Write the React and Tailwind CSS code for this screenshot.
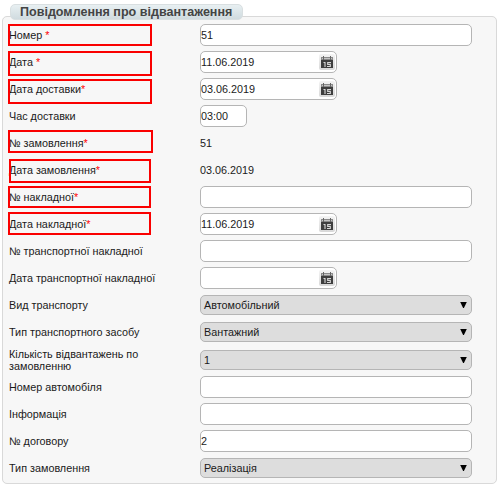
const rows = [
  { label: 'Номер ', required: true, kind: 'text', value: '51', mark: 'left-[5px] top-[2px] w-[144px] h-[22px]' },
  { label: 'Дата ', required: true, kind: 'date', value: '11.06.2019', mark: 'left-[5px] top-[2px] w-[144px] h-[25px]' },
  { label: 'Дата доставки', required: true, kind: 'date', value: '03.06.2019', mark: 'left-[5px] top-[3px] w-[144px] h-[25px]' },
  { label: 'Час доставки', kind: 'time', value: '03:00' },
  { label: '№ замовлення', required: true, kind: 'plain', value: '51', mark: 'left-[5px] top-0 w-[145px] h-[23px]' },
  { label: 'Дата замовлення', required: true, kind: 'plain', value: '03.06.2019', mark: 'left-[6px] top-[2px] w-[142px] h-[24px]' },
  { label: '№ накладної', required: true, kind: 'text', value: '', mark: 'left-[5px] top-[2px] w-[143px] h-[22px]' },
  { label: 'Дата накладної', required: true, kind: 'date', value: '11.06.2019', mark: 'left-[5px] top-px w-[143px] h-[23px]' },
  { label: '№ транспортної накладної', kind: 'text', value: '' },
  { label: 'Дата транспортної накладної', kind: 'date', value: '' },
  { label: 'Вид транспорту', kind: 'select', value: 'Автомобільний' },
  { label: 'Тип транспортного засобу', kind: 'select', value: 'Вантажний' },
  { label: 'Кількість відвантажень по замовленню', kind: 'select', value: '1', tall: true },
  { label: 'Номер автомобіля', kind: 'text', value: '' },
  { label: 'Інформація', kind: 'text', value: '' },
  { label: '№ договору', kind: 'text', value: '2' },
  { label: 'Тип замовлення', kind: 'select', value: 'Реалізація' },
];

function CalendarIcon() {
  return (
    <span className="mt-[2px] mr-px flex h-4 w-4 items-center justify-center rounded-[2px] bg-linear-to-b from-[#f4f4f4] to-[#d8d8d8]">
      <svg width="16" height="16" viewBox="0 0 16 16">
        <path d="M2 3h12v3H2z" fill="#8a8a8a" />
        <path d="M3 4h10v1H3z" fill="#c4c4c4" />
        <path d="M4 2h1v4H4zM11 2h1v4h-1z" fill="#666" />
        <path d="M2 6h12v8H2z" fill="#3e3e3e" />
        <path d="M4.5 8.5H6V13M12 8.5H8.7v1.9h2.6v2.1H8" fill="none" stroke="#d8d8d8" strokeWidth="1.1" />
      </svg>
    </span>
  );
}

const box = 'h-[22px] rounded-[5px] border border-[#b5b5b5] bg-white leading-[20px]';

function Control({ kind, value, tall }) {
  if (kind === 'plain') return <div className="mt-[2px] leading-[22px]">{value}</div>;
  if (kind === 'time') return <div className={`${box} mt-[2px] w-[47px]`}>{value}</div>;
  if (kind === 'date')
    return (
      <div className={`${box} mt-[2px] flex w-[137px] justify-between`}>
        <span>{value}</span>
        <CalendarIcon />
      </div>
    );
  if (kind === 'select')
    return (
      <div
        className={`${tall ? 'mt-[4px]' : 'mt-[3px]'} flex h-5 w-[272px] items-center justify-between rounded-[5px] border border-[#b5b5b5] bg-[#dddddd] pr-1 pl-[3px] leading-[18px]`}
      >
        <span>{value}</span>
        <svg width="7" height="8" viewBox="0 0 7 8">
          <path d="M0.2 1h6.6L3.9 7H3.1z" fill="#000" />
        </svg>
      </div>
    );
  return <div className={`${box} mt-[2px] w-[272px]`}>{value}</div>;
}

function Row({ label, required, mark, tall, kind, value }) {
  return (
    <div className={`relative flex items-start ${tall ? 'h-[28px]' : 'h-[27px]'}`}>
      <div className={`w-[191px] shrink-0 pr-[30px] ${tall ? 'pt-[2px] leading-[12px]' : 'pt-[2px] leading-[22px]'}`}>
        {label}
        {required && <span className="text-[#ff0000]">*</span>}
      </div>
      <Control kind={kind} value={value} tall={tall} />
      {mark && <div className={`absolute -ml-[6px] border-2 border-[#fa0000] ${mark}`} />}
    </div>
  );
}

export default function App() {
  return (
    <div className="relative h-[486px] w-[499px] bg-white pt-4 pl-[2px] font-['Liberation_Sans',Arial,sans-serif] text-[10.8px] text-[#1a1a1a]">
      <fieldset className="h-[468px] w-[495px] rounded-[5px] border border-[#d9d9d9] bg-[#f7f7f7] pt-[5px] pl-[6px]">
        {rows.map((row) => (
          <Row key={row.label} {...row} />
        ))}
      </fieldset>
      <div className="absolute top-1 left-[10px] h-4 w-[233px] rounded-[5px] border border-[#d9dfe1] bg-linear-to-b from-[#e8f0f2] to-[#d0dbdf] pl-[9px] text-[12.55px] leading-[14px] font-bold whitespace-nowrap text-[#444444]">
        Повідомлення про відвантаження
      </div>
    </div>
  );
}
